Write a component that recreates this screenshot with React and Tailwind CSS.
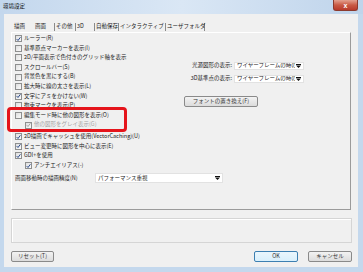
import React from 'react';

const font = "font-['Noto_Sans_CJK_JP','Liberation_Sans',sans-serif]";

const Check = ({ checked, disabled }) => (
    <span className="w-[7px] h-[7px] shrink-0 border border-[#8e8f8f] bg-linear-to-br from-[#dedede] to-[#fbfbfb] flex items-center justify-center">
        {checked && (
            <svg width="6" height="6" viewBox="0 0 6 6">
                <path d="M0.8 3.1 L2.4 4.8 L5.3 0.9" fill="none" stroke={disabled ? '#a8a8a8' : '#2b4a8a'} strokeWidth="1.2" />
            </svg>
        )}
    </span>
);

const Row = ({ label, checked, disabled, indent }) => (
    <div className={`flex items-center h-[9.6px] gap-[2px] ${indent ? 'pl-[10px]' : ''}`}>
        <Check checked={checked} disabled={disabled} />
        <span className={`whitespace-nowrap ${disabled ? 'text-[#a3a3a3]' : 'text-[#222]'}`}>{label}</span>
    </div>
);

const Arrow = () => (
    <svg width="5" height="4" viewBox="0 0 5 4" className="shrink-0">
        <rect x="0" y="0" width="5" height="1" fill="#111" />
        <path d="M0 1.5 L5 1.5 L2.5 4 Z" fill="#111" />
    </svg>
);

const Select = ({ value, className, clip }) => (
    <div className={`h-[8px] bg-white border border-[#e2e2e2] flex items-center pl-[2px] pr-[2px] gap-[1px] ${className}`}>
        <span className={`flex-1 whitespace-nowrap text-[#222] ${clip ? 'overflow-hidden' : ''}`}>{value}</span>
        <Arrow />
    </div>
);

const Btn = ({ children, className, primary }) => (
    <div className={`h-[11px] rounded-[2px] border flex items-center justify-center text-[#333] bg-linear-to-b ${primary ? 'border-[#3c7fb1] from-[#eaf6fd] to-[#d9f0fc]' : 'border-[#8a8a8a] from-[#f3f3f3] to-[#dcdcdc]'} ${className}`}>
        {children}
    </div>
);

const tabs = [
    { label: '描画', w: 'w-[21px]', sep: false },
    { label: '画面', w: 'w-[22px]', sep: false },
    { label: 'その他', w: 'w-[21px]', sep: true },
    { label: '3D', w: 'w-[19px]', sep: true },
    { label: '自動保存', w: 'w-[24px]', sep: true },
    { label: 'インタラクティブ', w: 'w-[47px]', sep: true },
    { label: 'ユーザフォルダ', w: 'w-[40px]', sep: true, last: true },
];

export default function App() {
    return (
        <div className={`w-[363px] h-[272px] bg-[#c4d8ed] flex flex-col text-[5.5px] leading-none ${font}`}>
            {/* Title bar */}
            <div className="h-[14px] flex items-start bg-linear-to-r from-[#c3d7ed] via-[#dae7f5] to-[#bfd4eb]">
                <span className="pl-[3px] pt-[4px] text-[#111]">環境設定</span>
                <div className="ml-auto mr-[5px] w-[25px] h-[11px] rounded-b-[3px] border border-t-0 border-[#8c3a2e] bg-linear-to-b from-[#e3a08f] via-[#c95a45] to-[#b8392a] flex items-center justify-center">
                    <span className="text-white text-[7px] font-bold font-['Liberation_Sans',sans-serif]">x</span>
                </div>
            </div>

            {/* Client */}
            <div className="flex-1 ml-[4px] mr-[5px] mb-[5px] bg-[#f0f0f0] flex flex-col pt-[7px] pl-[7px]">
                {/* Tabs */}
                <div className="h-[11px] flex items-center">
                    {tabs.map(t => (
                        <div
                            key={t.label}
                            className={`${t.w} h-[8px] flex items-center whitespace-nowrap text-[#222] ${t.sep ? 'border-l border-[#8a8a8a] pl-[1px]' : 'pl-[3px]'} ${t.last ? 'border-r' : ''}`}
                        >
                            {t.label}
                        </div>
                    ))}
                </div>

                {/* Panel */}
                <div className="w-[340px] h-[178px] border border-t-white border-l-white border-r-[#9b9b9b] border-b-[#9b9b9b] flex flex-col pl-[3px] pt-[1px]">
                    <div className="flex">
                        <div className="w-[169px] flex flex-col">
                            <Row label="ルーラー(R)" checked />
                            <Row label="基準原点マーカーを表示(I)" />
                            <Row label="2D/平面表示で色付きのグリッド軸を表示" />
                            <Row label="スクロールバー(S)" />
                            <Row label="背景色を黒にする(B)" />
                            <Row label="拡大時に線の太さを表示(L)" />
                            <Row label="文字にアミをかけない(W)" checked />
                            <Row label="拘束マークを表示(P)" />
                            <div className="relative">
                                <Row label="編集モード時に他の図形を表示(O)" />
                                <Row label="他の図形をグレイ表示(G)" checked disabled indent />
                                <div className="absolute left-[-8px] top-[-3.5px] w-[120px] h-[25px] border-[3px] border-[#e5141b] rounded-[4px]" />
                            </div>
                            <div className="h-[2px]" />
                            <Row label="2D描画でキャッシュを使用(VectorCaching)(U)" checked />
                            <Row label="ビュー変更時に図形を中心に表示(E)" checked />
                            <Row label="GDI+を使用" checked />
                            <Row label="アンチエイリアス(-)" checked indent />
                        </div>

                        <div className="flex flex-col pt-[28px]">
                            <div className="flex items-center gap-[2px]">
                                <span className="w-[48px] text-right text-[#222] whitespace-nowrap">光源図形の表示:</span>
                                <Select value="ワイヤーフレームの時のみ" className="w-[70px]" clip />
                            </div>
                            <div className="flex items-center gap-[2px] mt-[5px]">
                                <span className="w-[48px] text-right text-[#222] whitespace-nowrap">3D基準点の表示:</span>
                                <Select value="ワイヤーフレームの時のみ" className="w-[70px]" clip />
                            </div>
                            <Btn className="w-[74px] mt-[13px]">フォントの置き換え(F)</Btn>
                        </div>
                    </div>

                    <div className="flex items-center mt-[3px] h-[10px]">
                        <span className="w-[80px] shrink-0 text-[#222] whitespace-nowrap">画面移動時の描画精度(N)</span>
                        <Select value="パフォーマンス重視" className="w-[128px] h-[10px]" />
                    </div>
                </div>

                {/* Empty group box */}
                <div className="w-[341px] h-[25px] mt-[8px] border border-[#d5d5d5] shadow-[inset_1px_1px_0_#ffffff]" />

                {/* Buttons */}
                <div className="w-[341px] flex mt-[8px]">
                    <Btn className="w-[43px]">リセット(T)</Btn>
                    <Btn className="w-[44px] ml-auto" primary>OK</Btn>
                    <Btn className="w-[44px] ml-[10px]">キャンセル</Btn>
                </div>
            </div>
        </div>
    );
}
